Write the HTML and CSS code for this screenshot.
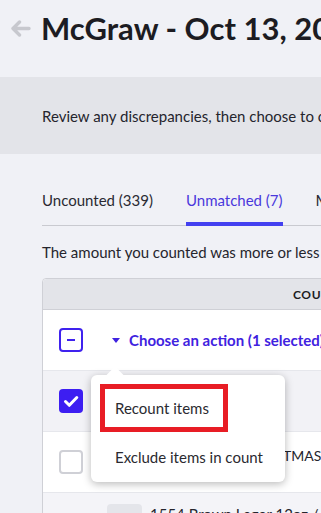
FILE: index.html
```html
<!DOCTYPE html>
<html lang="en">
<head>
    <meta charset="UTF-8">
    <meta name="viewport" content="width=device-width, initial-scale=1.0">
    <title>McGraw - Oct 13, 2023 Count</title>
    <link rel="stylesheet" href="styles.css">
</head>
<body>
    <header class="top">
        <svg class="back" width="21" height="17" viewBox="0 0 21 17">
            <path d="M19 8.5H3 M9.5 2L3 8.5l6.5 6.5" fill="none" stroke="#c7c8ce" stroke-width="3.4" stroke-linecap="round" stroke-linejoin="round"/>
        </svg>
        <h1>McGraw - Oct 13, 2023 Count</h1>
    </header>

    <div class="notice">Review any discrepancies, then choose to complete the count.</div>

    <div class="content">
        <nav class="tabs">
            <a class="tab">Uncounted (339)</a>
            <a class="tab active">Unmatched (7)</a>
            <a class="tab">Matched (612)</a>
        </nav>

        <p class="hint">The amount you counted was more or less than the expected amount.</p>

        <div class="table">
            <div class="thead">
                <span class="th">Counted</span>
            </div>

            <div class="row action-row">
                <span class="check partial"></span>
                <button class="action-toggle"><span class="caret"></span>Choose an action (1 selected)</button>

                <div class="menu">
                    <div class="menu-item"><span class="marked">Recount items</span></div>
                    <div class="menu-item">Exclude items in count</div>
                </div>
            </div>

            <div class="row selected">
                <span class="check checked">
                    <svg width="24" height="24" viewBox="0 0 24 24">
                        <path d="M6.5 12.5l3.8 3.8L17.8 8.5" fill="none" stroke="#fff" stroke-width="3" stroke-linecap="round" stroke-linejoin="round"/>
                    </svg>
                </span>
                <span class="item-name">DOGFISH HEAD 60</span>
            </div>

            <div class="row">
                <span class="check"></span>
                <span class="item-name">ANCHOR SPECIAL CHRISTMAS</span>
            </div>

            <div class="row sub-row">
                <span class="thumb"></span>
                <span class="sub-name">1554 Brown Lager 12oz / 4 pack</span>
            </div>
        </div>
    </div>
</body>
</html>
```

FILE: styles.css
```css
body {
    font-family: Lato, "Noto Sans", sans-serif;
    background-color: #f0f1f6;
    color: #25252d;
    margin: 0;
    width: 321px;
    height: 513px;
    overflow: hidden;
}
.top {
    display: flex;
    align-items: flex-start;
    gap: 10px;
    height: 77px;
    padding: 9px 0 0 10px;
    box-sizing: border-box;
    white-space: nowrap;
}
.back {
    flex-shrink: 0;
    margin-top: 11px;
}
h1 {
    margin: 0;
    font-size: 31px;
    line-height: 38px;
    font-weight: 700;
    color: #1c1c22;
}
.notice {
    display: flex;
    align-items: center;
    height: 77px;
    padding-left: 42px;
    background: #e3e4e9;
    font-size: 15px;
    white-space: nowrap;
}
.content {
    padding-left: 42px;
}
.tabs {
    display: flex;
    gap: 33px;
    margin-top: 36px;
    border-bottom: 1px solid #c9cad0;
    white-space: nowrap;
}
.tab {
    font-size: 15px;
    line-height: 20px;
    padding-bottom: 12px;
    border-bottom: 4px solid transparent;
    margin-bottom: -1px;
    color: #2a2a32;
}
.tab.active {
    color: #4a38dc;
    border-bottom-color: #4340f0;
}
.hint {
    margin: 16px 0;
    font-size: 15px;
    line-height: 20px;
    white-space: nowrap;
}
.table {
    width: 600px;
    border: 1px solid #cfd0d6;
    border-radius: 4px 0 0 0;
    background: #fff;
}
.thead {
    height: 30px;
    display: flex;
    align-items: center;
    padding-left: 250px;
    background: #e3e4e9;
    border-bottom: 1px solid #cfd0d6;
    border-radius: 4px 0 0 0;
}
.th {
    font-size: 12px;
    font-weight: 700;
    letter-spacing: 0.6px;
    text-transform: uppercase;
    color: #1c1c22;
}
.row {
    position: relative;
    display: flex;
    align-items: center;
    height: 60px;
    padding-left: 16px;
    border-bottom: 1px solid #e6e7ec;
    background: #fff;
}
.row.selected {
    background: #f2f2f6;
}
.check {
    flex-shrink: 0;
    width: 24px;
    height: 24px;
    box-sizing: border-box;
    border: 2px solid #cfd0d6;
    border-radius: 4px;
    background: #fff;
    display: flex;
    align-items: center;
    justify-content: center;
}
.check.partial {
    border-color: #3f22ee;
}
.check.partial::after {
    content: "";
    width: 8px;
    height: 2px;
    background: #3f22ee;
}
.check.checked {
    border: none;
    background: #3d1ef2;
}
.action-toggle {
    display: flex;
    align-items: center;
    margin-left: 29px;
    padding: 0;
    border: none;
    background: none;
    font-family: inherit;
    font-size: 15px;
    font-weight: 700;
    color: #3f22e0;
    white-space: nowrap;
    cursor: pointer;
}
.caret {
    width: 0;
    height: 0;
    border-left: 4px solid transparent;
    border-right: 4px solid transparent;
    border-top: 5px solid #3f22e0;
    margin-right: 9px;
}
.item-name {
    margin-left: 39px;
    font-size: 14px;
    white-space: nowrap;
    margin-top: -14px;
}
.sub-row {
    background: #f4f4f8;
    align-items: flex-start;
    padding-left: 64px;
}
.thumb {
    width: 35px;
    height: 35px;
    margin-top: 11px;
    border-radius: 4px;
    background: #e4e5ea;
}
.sub-name {
    margin: 12px 0 0 8px;
    font-size: 15px;
    white-space: nowrap;
}

/* dropdown */
.menu {
    position: absolute;
    left: 48px;
    top: 65px;
    z-index: 5;
    width: 194px;
    padding-top: 9px;
    background: #fff;
    border-radius: 6px;
    box-shadow: 0 2px 9px rgba(0, 0, 0, 0.28);
}
.menu::before {
    content: "";
    position: absolute;
    left: 18px;
    top: -6px;
    width: 12px;
    height: 12px;
    background: #fff;
    transform: rotate(45deg);
}
.menu-item {
    position: relative;
    font-size: 15px;
    line-height: 50px;
    padding-left: 24px;
    color: #2a2a30;
    white-space: nowrap;
}
.menu-item:first-child {
    padding-left: 9px;
    line-height: 38px;
}
.marked {
    display: inline-block;
    border: 5px solid #e81d25;
    padding: 0 14px 0 10px;
}
```
